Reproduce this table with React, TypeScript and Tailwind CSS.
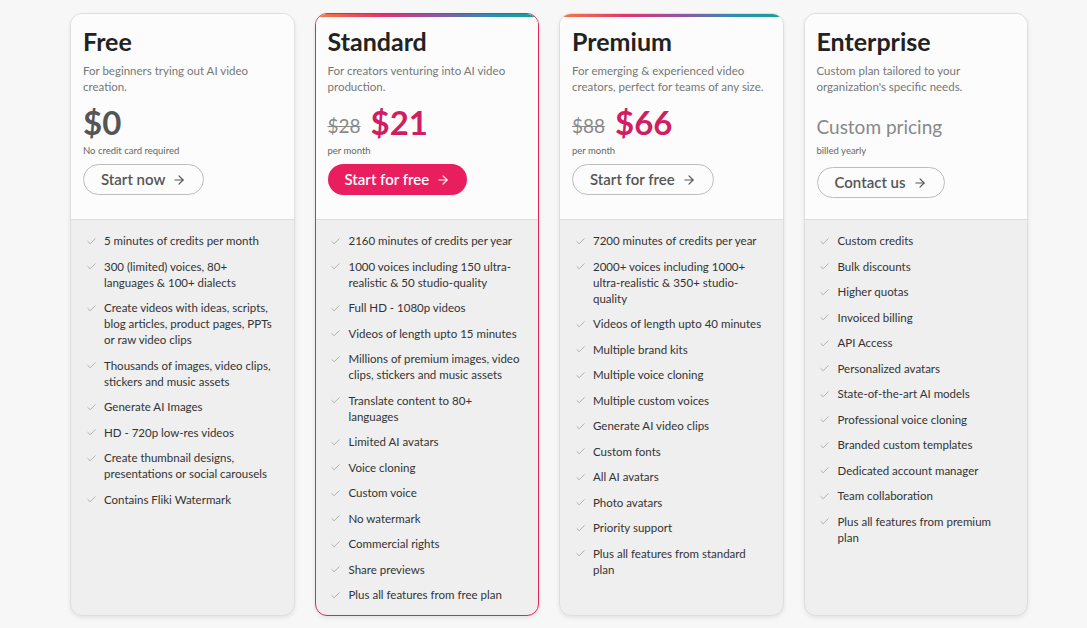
import { ArrowRight, Check } from "lucide-react"

type Plan = {
  name: string
  description: string
  oldPrice?: string
  price?: string
  custom?: boolean
  note: string
  cta: string
  primary?: boolean
  gradient?: boolean
  features: string[]
}

const plans: Plan[] = [
  {
    name: "Free",
    description: "For beginners trying out AI video creation.",
    price: "$0",
    note: "No credit card required",
    cta: "Start now",
    features: [
      "5 minutes of credits per month",
      "300 (limited) voices, 80+ languages & 100+ dialects",
      "Create videos with ideas, scripts, blog articles, product pages, PPTs or raw video clips",
      "Thousands of images, video clips, stickers and music assets",
      "Generate AI Images",
      "HD - 720p low-res videos",
      "Create thumbnail designs, presentations or social carousels",
      "Contains Fliki Watermark",
    ],
  },
  {
    name: "Standard",
    description: "For creators venturing into AI video production.",
    oldPrice: "$28",
    price: "$21",
    note: "per month",
    cta: "Start for free",
    primary: true,
    gradient: true,
    features: [
      "2160 minutes of credits per year",
      "1000 voices including 150 ultra-realistic & 50 studio-quality",
      "Full HD - 1080p videos",
      "Videos of length upto 15 minutes",
      "Millions of premium images, video clips, stickers and music assets",
      "Translate content to 80+ languages",
      "Limited AI avatars",
      "Voice cloning",
      "Custom voice",
      "No watermark",
      "Commercial rights",
      "Share previews",
      "Plus all features from free plan",
    ],
  },
  {
    name: "Premium",
    description: "For emerging & experienced video creators, perfect for teams of any size.",
    oldPrice: "$88",
    price: "$66",
    note: "per month",
    cta: "Start for free",
    gradient: true,
    features: [
      "7200 minutes of credits per year",
      "2000+ voices including 1000+ ultra-realistic & 350+ studio-quality",
      "Videos of length upto 40 minutes",
      "Multiple brand kits",
      "Multiple voice cloning",
      "Multiple custom voices",
      "Generate AI video clips",
      "Custom fonts",
      "All AI avatars",
      "Photo avatars",
      "Priority support",
      "Plus all features from standard plan",
    ],
  },
  {
    name: "Enterprise",
    description: "Custom plan tailored to your organization's specific needs.",
    custom: true,
    note: "billed yearly",
    cta: "Contact us",
    features: [
      "Custom credits",
      "Bulk discounts",
      "Higher quotas",
      "Invoiced billing",
      "API Access",
      "Personalized avatars",
      "State-of-the-art AI models",
      "Professional voice cloning",
      "Branded custom templates",
      "Dedicated account manager",
      "Team collaboration",
      "Plus all features from premium plan",
    ],
  },
]

function PlanCard({ plan }: { plan: Plan }) {
  return (
    <div
      className={`relative flex flex-col overflow-hidden rounded-[12px] border bg-[#efefef] shadow-[0_2px_4px_rgba(0,0,0,0.08)] ${
        plan.primary ? "border-[#e0245e]" : "border-[#dedede]"
      }`}
    >
      {plan.gradient && (
        <div className="absolute left-0 right-0 top-0 h-[3px] bg-[linear-gradient(90deg,#f47c45,#e2336b_30%,#8a57a6_55%,#2d8fb0_80%,#16a293)]" />
      )}

      {/* Header */}
      <div className="h-[206px] shrink-0 border-b border-[#dedede] bg-[#fcfcfc] px-[12px] pt-[13px]">
        <h2 className="text-[25px] font-bold leading-[28px] text-[#222]">{plan.name}</h2>
        <p className="mt-[8px] h-[32px] text-[11.5px] leading-[16px] text-[#777]">{plan.description}</p>

        <div className="mt-[9px] flex h-[36px] items-end">
          {plan.custom ? (
            <span className="pb-[1px] text-[19px] leading-[24px] text-[#888]">Custom pricing</span>
          ) : (
            <>
              {plan.oldPrice && (
                <span className="mr-[10px] pb-[2px] text-[19px] leading-[24px] text-[#8a8a8a] line-through">
                  {plan.oldPrice}
                </span>
              )}
              <span
                className={`text-[33px] font-bold leading-[36px] ${plan.oldPrice ? "text-[#d11d62]" : "text-[#555]"}`}
              >
                {plan.price}
              </span>
            </>
          )}
        </div>
        <div className="mt-[4px] text-[9.5px] leading-[14px] text-[#666]">{plan.note}</div>

        <button
          className={`flex h-[31px] items-center gap-[7px] rounded-full px-[17px] text-[15px] font-semibold ${
            plan.custom ? "mt-[9px]" : "mt-[6px]"
          } ${
            plan.primary
              ? "bg-[#e91e5f] text-white"
              : "border border-[#bdbdbd] bg-[#fcfcfc] text-[#555]"
          }`}
        >
          {plan.cta}
          <ArrowRight className="h-[14px] w-[14px]" strokeWidth={2} />
        </button>
      </div>

      {/* Features */}
      <ul className="flex flex-1 flex-col gap-[9.5px] pb-3 pl-[13px] pr-[15px] pt-[13px]">
        {plan.features.map((feature, i) => (
          <li key={i} className="flex items-start gap-[6px] text-[11.5px] leading-[16px] text-[#333]">
            <span className="flex h-[16px] w-[14px] shrink-0 items-center justify-center">
              <Check className="h-[11px] w-[11px] text-[#9a9a9a]" strokeWidth={1.6} />
            </span>
            <span>{feature}</span>
          </li>
        ))}
      </ul>
    </div>
  )
}

export default function App() {
  return (
    <div
      className="h-[628px] w-[1087px] overflow-hidden bg-[#f7f7f7] pl-[70px] pt-[13px]"
      style={{ fontFamily: "Lato, 'Open Sans', sans-serif" }}
    >
      <div className="grid h-[603px] w-[958px] grid-cols-4 gap-[20px]">
        {plans.map((plan) => (
          <PlanCard key={plan.name} plan={plan} />
        ))}
      </div>
    </div>
  )
}
